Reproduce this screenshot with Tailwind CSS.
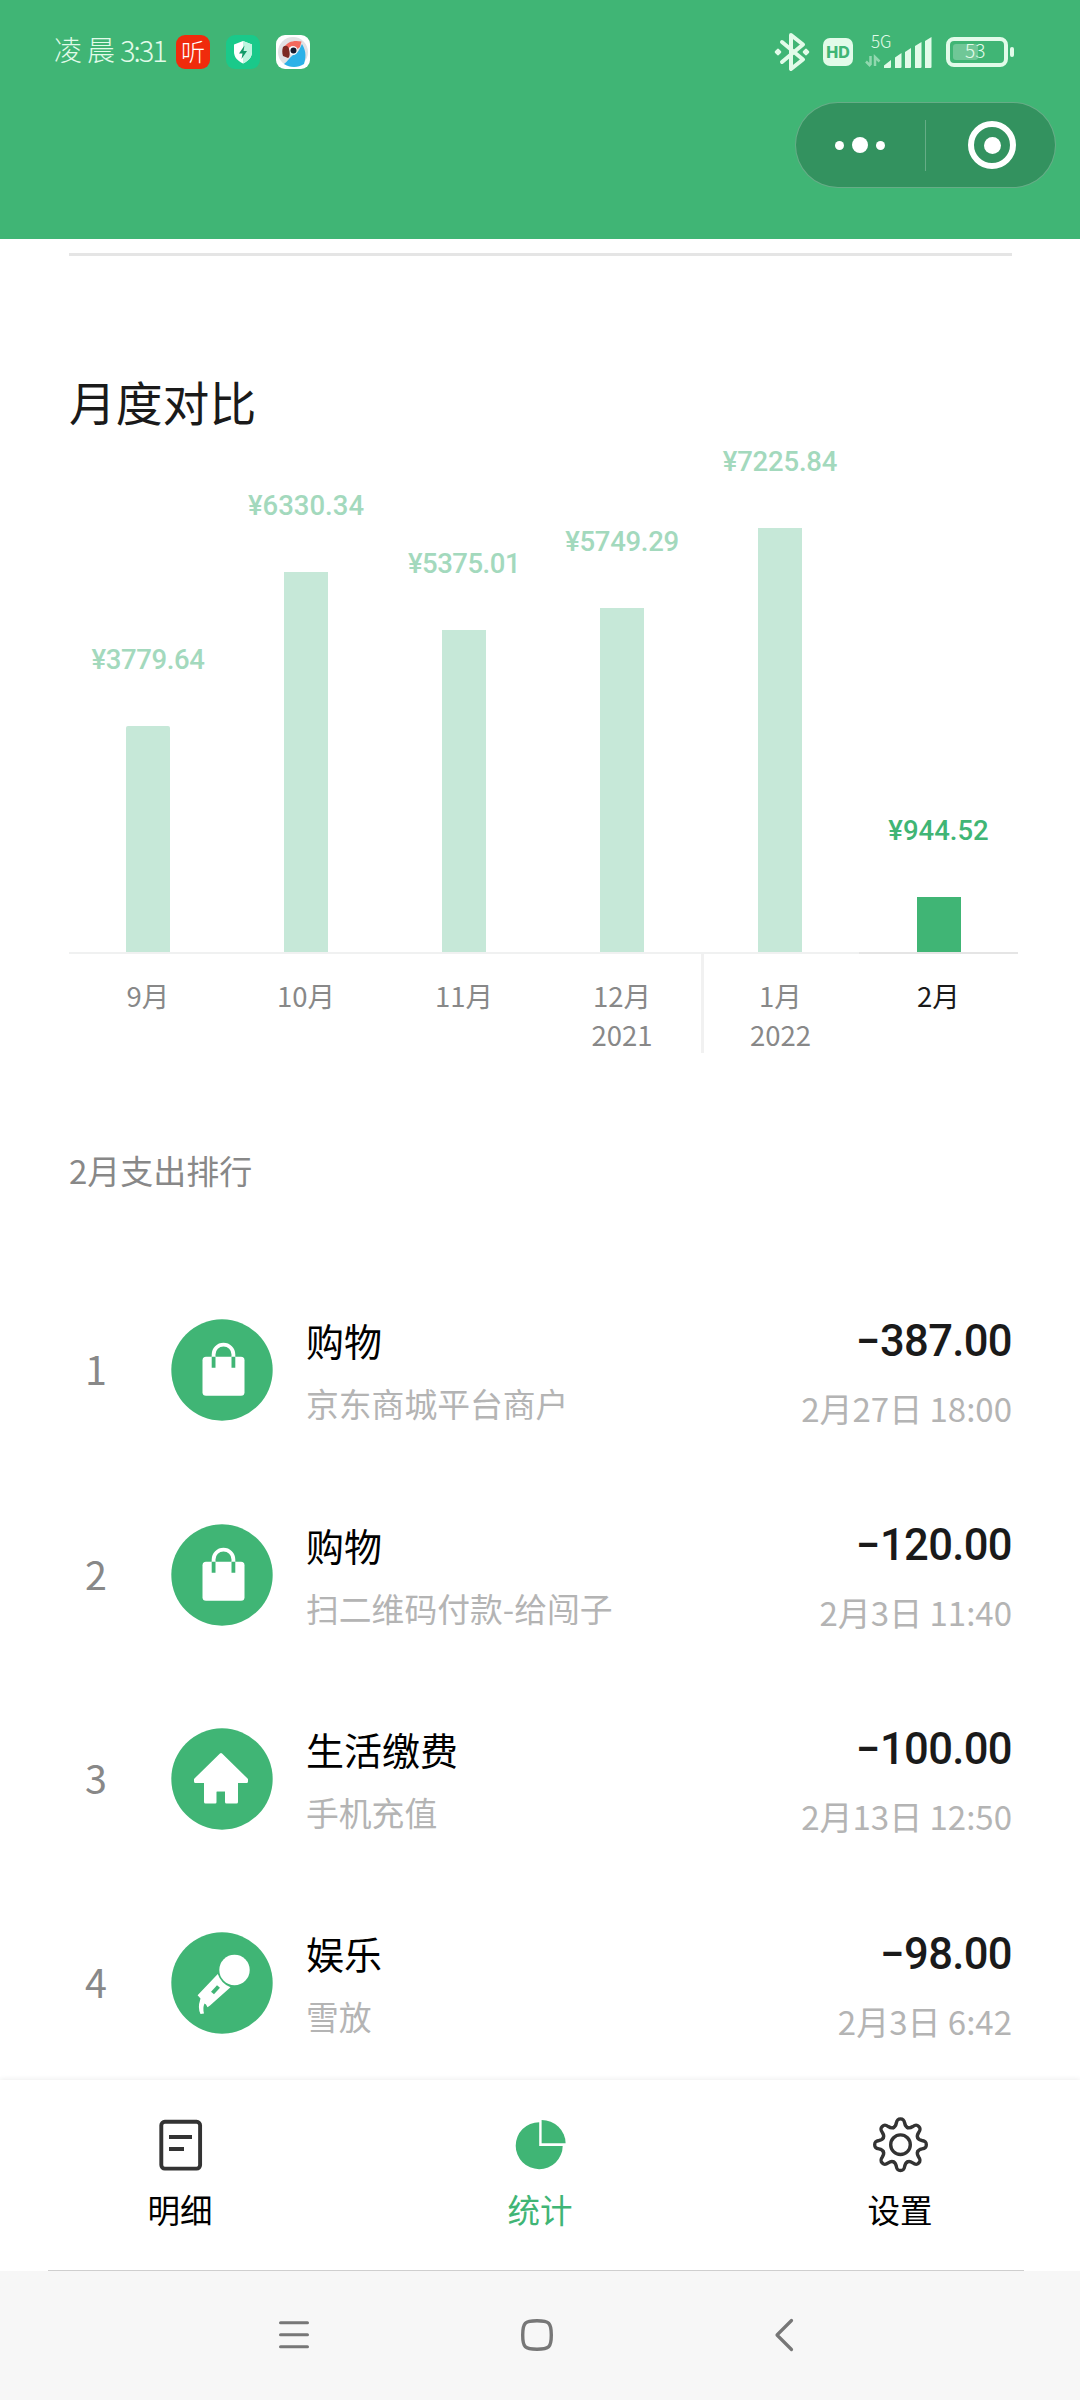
<!DOCTYPE html>
<html lang="zh-CN">
<head>
<meta charset="utf-8">
<title>月度统计</title>
<script src="https://cdn.jsdelivr.net/npm/@tailwindcss/browser@4"></script>
</head>
<body class="flex h-[2400px] w-[1080px] flex-col overflow-hidden bg-white font-['Noto_Sans_CJK_SC',sans-serif] text-[#1a1a1a]">

<header class="flex h-[239px] shrink-0 flex-col bg-[#40b575]">
  <!-- status bar -->
  <div class="flex h-[104px] shrink-0 items-center justify-between pr-[66px] pl-[54px] text-[#e2fbe9]">
    <div class="flex items-center">
      <div class="flex w-[122px] shrink-0 items-center text-[28px] leading-[40px] font-light whitespace-nowrap">
        <span class="mt-[-6px] tracking-[5px]">凌晨</span><span class="mt-[-6px] text-[29px] tracking-[-2px]">3:31</span>
      </div>
      <div class="flex h-[34px] w-[34px] items-center justify-center rounded-[9px] bg-[#f02b0c] text-[24px] leading-[30px] font-light text-white"><span class="mt-[-3px]">听</span></div>
      <svg class="ml-4" width="34" height="34" viewBox="0 0 34 34">
        <rect width="34" height="34" rx="9" fill="#1ac98a"/>
        <path d="M17 6 26 9.500V17C26 22 22.500 26 17 28.500 11.500 26 8 22 8 17V9.500Z" fill="#fff"/>
        <path d="M17 6 26 9.500V17C26 22 22.500 26 17 28.500Z" fill="#bff5e0"/>
        <path d="M18.500 10.500 13 18.500H16.500L15.500 24 21 16H17.500Z" fill="#129a68"/>
      </svg>
      <svg class="ml-4" width="34" height="34" viewBox="0 0 34 34">
        <rect width="34" height="34" rx="9" fill="#fff"/>
        <circle cx="17" cy="17" r="15" fill="#e2e2e4"/>
        <path d="M8 13C11 6 19 5 25.500 6.500L24 12 20 15 11 14Z" fill="#f4695c"/>
        <path d="M17 20C22 19 24 13 26 9 29 14 31 20 28 29 22 33 14 33 8 29 11 27 13 23 17 20Z" fill="#2cb1e8"/>
        <circle cx="17" cy="15.500" r="4.500" fill="#f6fafc"/>
        <circle cx="17.500" cy="15.500" r="3" fill="#171a2c"/>
        <path d="M7 12C9 10 12 10 13 14 14 18 14 22 12 23L7 21C6 18 6 15 7 12Z" fill="#7d2a22"/>
      </svg>
    </div>
    <div class="flex items-center">
      <svg width="36" height="40" viewBox="0 0 36 40" fill="none" stroke="currentColor" stroke-width="4" stroke-linejoin="round" stroke-linecap="round">
        <path d="M8 10 29 27.500 17 37V3L29 12.500 8 30"/>
        <path d="M4 18.200 5.800 20 4 21.800 2.200 20ZM32 18.200 33.800 20 32 21.800 30.200 20Z" stroke-width="3"/>
      </svg>
      <div class="ml-[13px] flex h-[28px] w-[30px] items-center justify-center rounded-[7px] bg-[#e2fbe9] font-[Inter,sans-serif] text-[16px] leading-[20px] font-extrabold text-[#40b575]">HD</div>
      <div class="relative ml-[12px] h-[36px] w-[67px]">
        <span class="absolute top-[-2px] left-[6px] text-[17px] leading-[18px] font-light">5G</span>
        <svg class="absolute top-0 left-0" width="67" height="36" viewBox="0 0 67 36" fill="currentColor">
          <path d="M19 34V31.500L26 26V33Q26 34 25 34ZM30 34V23.500L36.500 19V33Q36.500 34 35.500 34ZM40 34V18L46 14V33Q46 34 45 34ZM50 34V12L56.500 8V33Q56.500 34 55.500 34ZM60 34V7L66.500 3V33Q66.500 34 65.500 34Z"/>
          <path d="M5.500 22V31M1 27.500 5.500 32M10 32V23L14.500 27.500" fill="none" stroke="currentColor" stroke-width="2.500" opacity=".5"/>
        </svg>
      </div>
      <div class="ml-[14px] flex h-[30px] w-[62px] items-center rounded-[8px] border-4 border-[#e2fbe9] px-[3px]">
        <div class="h-[16px] w-[25px] rounded-[3px] bg-white/25"></div>
        <span class="-ml-[13px] mt-[-4px] text-[19px] leading-[20px] font-light">53</span>
      </div>
      <div class="ml-[2px] h-[10px] w-[4px] rounded-[2px] bg-[#e2fbe9]"></div>
    </div>
  </div>
  <!-- mini-program capsule -->
  <div class="mt-[-2px] mr-[24px] flex h-[86px] w-[261px] items-center self-end rounded-full border border-white/25 bg-[#33925f]">
    <div class="flex w-[127px] items-center justify-center gap-2">
      <i class="h-[9px] w-[9px] rounded-full bg-white"></i><i class="h-4 w-4 rounded-full bg-white"></i><i class="h-[9px] w-[9px] rounded-full bg-white"></i>
    </div>
    <div class="ml-[2px] h-[51px] w-px bg-white/25"></div>
    <div class="ml-[42px] flex h-12 w-12 items-center justify-center rounded-full border-[6px] border-white"><i class="h-[17px] w-[17px] rounded-full bg-white"></i></div>
  </div>
</header>

<main class="flex h-[1841px] shrink-0 flex-col overflow-hidden pr-[68px] pl-[69px]">
  <div class="mt-[14px] h-[3px] shrink-0 bg-[#e5e5e5]"></div>
  <h1 class="mt-[115px] h-[61px] shrink-0 text-[46.800px] leading-[60px] font-normal">月度对比</h1>

  <!-- monthly bar chart -->
  <section class="mt-[8px] flex h-[614px] w-[949px] shrink-0">
    <div class="flex w-[158px] flex-col items-center">
      <div class="flex h-[512px] w-full flex-col items-center justify-end">
        <span class="mb-[46px] font-[Roboto] text-[27.500px] leading-[40px] font-medium tracking-[-0.400px] text-[#a3d9bd]">¥3779.64</span>
        <div class="w-11 rounded-t-[2px] bg-[#c6e8d8]" style="height:226px"></div>
      </div>
      <div class="h-[2px] w-full bg-[#f0f1f1]"></div>
      <div class="mt-[22px] text-center text-[27.500px] leading-[39px] text-[#888]">9月</div>
    </div>
    <div class="flex w-[158px] flex-col items-center">
      <div class="flex h-[512px] w-full flex-col items-center justify-end">
        <span class="mb-[46px] font-[Roboto] text-[27.500px] leading-[40px] font-medium text-[#a3d9bd]">¥6330.34</span>
        <div class="w-11 bg-[#c6e8d8]" style="height:380px"></div>
      </div>
      <div class="h-[2px] w-full bg-[#f0f1f1]"></div>
      <div class="mt-[22px] text-center text-[27.500px] leading-[39px] text-[#888]">10月</div>
    </div>
    <div class="flex w-[158px] flex-col items-center">
      <div class="flex h-[512px] w-full flex-col items-center justify-end">
        <span class="mb-[46px] font-[Roboto] text-[27.500px] leading-[40px] font-medium tracking-[-0.500px] text-[#a3d9bd]">¥5375.01</span>
        <div class="w-11 bg-[#c6e8d8]" style="height:322px"></div>
      </div>
      <div class="h-[2px] w-full bg-[#f0f1f1]"></div>
      <div class="mt-[22px] text-center text-[27.500px] leading-[39px] text-[#888]">11月</div>
    </div>
    <div class="flex w-[158px] flex-col items-center">
      <div class="flex h-[512px] w-full flex-col items-center justify-end">
        <span class="mb-[46px] font-[Roboto] text-[27.500px] leading-[40px] font-medium tracking-[-0.300px] text-[#a3d9bd]">¥5749.29</span>
        <div class="w-11 bg-[#c6e8d8]" style="height:344px"></div>
      </div>
      <div class="h-[2px] w-full bg-[#f0f1f1]"></div>
      <div class="mt-[22px] text-center text-[27.500px] leading-[39px] text-[#888]">12月<br>2021</div>
    </div>
    <div class="flex w-[158px] flex-col items-center">
      <div class="flex h-[512px] w-full flex-col items-center justify-end">
        <span class="mb-[46px] font-[Roboto] text-[27.500px] leading-[40px] font-medium tracking-[-0.200px] text-[#a3d9bd]">¥7225.84</span>
        <div class="w-11 bg-[#c6e8d8]" style="height:424px"></div>
      </div>
      <div class="h-[2px] w-full bg-[#f0f1f1]"></div>
      <div class="-ml-[1px] h-[99px] w-full border-l-[3px] border-[#f1f1f1] pt-[22px] pr-[1px] text-center text-[27.500px] leading-[39px] text-[#888]">1月<br>2022</div>
    </div>
    <div class="flex w-[159px] flex-col items-center">
      <div class="flex h-[512px] w-full flex-col items-center justify-end">
        <span class="mb-[46px] font-[Roboto] text-[27.500px] leading-[40px] font-medium text-[#40b575]">¥944.52</span>
        <div class="w-11 bg-[#40b575]" style="height:55px"></div>
      </div>
      <div class="h-[2px] w-full bg-[#e5e5e5]"></div>
      <div class="mt-[22px] text-center text-[27.500px] leading-[39px]">2月</div>
    </div>
  </section>

  <h2 class="mt-[96px] h-[40px] shrink-0 text-[33px] leading-[40px] font-normal text-[#888]">2月支出排行</h2>

  <!-- spending ranking -->
  <ol class="mt-[78px] flex flex-col">
    <li class="flex h-[204.400px] shrink-0 items-center">
      <span class="mt-[-4px] w-[54px] text-center text-[39.500px] leading-[50px] text-[#888]">1</span>
      <svg class="ml-[48px]" width="102" height="102" viewBox="0 0 102 102">
        <circle cx="51" cy="51" r="50.700" fill="#40b575"/>
        <rect x="31.500" y="37.700" width="42" height="39" rx="3.500" fill="#fff"/>
        <path d="M42.600 38V35.500A9.900 9.900 0 0 1 62.400 35.500V38" fill="none" stroke="#fff" stroke-width="3.800"/>
        <path d="M42.600 37.700V48.700M62.400 37.700V48.700" stroke="#40b575" stroke-width="3.800"/>
      </svg>
      <div class="mt-[3px] ml-[33px] flex grow flex-col gap-[13px]">
        <span class="text-[38px] leading-[50px] text-black">购物</span>
        <span class="text-[32.800px] leading-[50px] text-[#b4b4b4]">京东商城平台商户</span>
      </div>
      <div class="mt-[9px] flex flex-col items-end gap-[16px]">
        <span class="font-[Roboto] text-[43.500px] leading-[50px] font-medium tracking-[-0.600px]">−387.00</span>
        <span class="text-[33px] leading-[50px] text-[#b4b4b4]">2月27日 18:00</span>
      </div>
    </li>
    <li class="flex h-[204.400px] shrink-0 items-center">
      <span class="mt-[-4px] w-[54px] text-center text-[39.500px] leading-[50px] text-[#888]">2</span>
      <svg class="ml-[48px]" width="102" height="102" viewBox="0 0 102 102">
        <circle cx="51" cy="51" r="50.700" fill="#40b575"/>
        <rect x="31.500" y="37.700" width="42" height="39" rx="3.500" fill="#fff"/>
        <path d="M42.600 38V35.500A9.900 9.900 0 0 1 62.400 35.500V38" fill="none" stroke="#fff" stroke-width="3.800"/>
        <path d="M42.600 37.700V48.700M62.400 37.700V48.700" stroke="#40b575" stroke-width="3.800"/>
      </svg>
      <div class="mt-[3px] ml-[33px] flex grow flex-col gap-[13px]">
        <span class="text-[38px] leading-[50px] text-black">购物</span>
        <span class="text-[32.800px] leading-[50px] text-[#b4b4b4]">扫二维码付款-给闯子</span>
      </div>
      <div class="mt-[9px] flex flex-col items-end gap-[16px]">
        <span class="font-[Roboto] text-[43.500px] leading-[50px] font-medium tracking-[-0.600px]">−120.00</span>
        <span class="text-[33px] leading-[50px] text-[#b4b4b4]">2月3日 11:40</span>
      </div>
    </li>
    <li class="flex h-[204.400px] shrink-0 items-center">
      <span class="mt-[-4px] w-[54px] text-center text-[39.500px] leading-[50px] text-[#888]">3</span>
      <svg class="ml-[48px]" width="102" height="102" viewBox="0 0 102 102">
        <circle cx="51" cy="51" r="50.700" fill="#40b575"/>
        <path d="M50 26.500 75.500 51.500V53.500H65.500V74H55.500V62.200H44.200V74H34.500V53.500H24.500V51.500Z" fill="#fff" stroke="#fff" stroke-width="3" stroke-linejoin="round"/>
        <path d="M45.700 77.500V63.700H54V77.500Z" fill="#40b575"/>
      </svg>
      <div class="mt-[3px] ml-[33px] flex grow flex-col gap-[13px]">
        <span class="text-[38px] leading-[50px] text-black">生活缴费</span>
        <span class="text-[32.800px] leading-[50px] text-[#b4b4b4]">手机充值</span>
      </div>
      <div class="mt-[9px] flex flex-col items-end gap-[16px]">
        <span class="font-[Roboto] text-[43.500px] leading-[50px] font-medium tracking-[-0.600px]">−100.00</span>
        <span class="text-[33px] leading-[50px] text-[#b4b4b4]">2月13日 12:50</span>
      </div>
    </li>
    <li class="flex h-[204.400px] shrink-0 items-center">
      <span class="mt-[-4px] w-[54px] text-center text-[39.500px] leading-[50px] text-[#888]">4</span>
      <svg class="ml-[48px]" width="102" height="102" viewBox="0 0 102 102">
        <circle cx="51" cy="51" r="50.700" fill="#40b575"/>
        <circle cx="63.500" cy="38" r="15.200" fill="#fff"/>
        <path d="M46.800 42Q50 51.500 59.500 55.300L39 73.500 36.500 75.300 35 72.500 33.500 71.500Q31.500 76 33 81.500L29.500 82Q26.500 75.500 29 68.500L29.500 66.500 26.600 63.300Z" fill="#fff"/>
        <path d="M41.500 61 47.500 54.500" stroke="#40b575" stroke-width="4"/>
      </svg>
      <div class="mt-[3px] ml-[33px] flex grow flex-col gap-[13px]">
        <span class="text-[38px] leading-[50px] text-black">娱乐</span>
        <span class="text-[32.800px] leading-[50px] text-[#b4b4b4]">雪放</span>
      </div>
      <div class="mt-[9px] flex flex-col items-end gap-[16px]">
        <span class="font-[Roboto] text-[43.500px] leading-[50px] font-medium tracking-[-0.600px]">−98.00</span>
        <span class="text-[33px] leading-[50px] text-[#b4b4b4]">2月3日 6:42</span>
      </div>
    </li>
  </ol>
</main>

<!-- tab bar -->
<nav class="grid h-[190px] shrink-0 grid-cols-3 bg-white text-[32.500px] leading-[40px] text-black shadow-[0_-1px_5px_rgba(0,0,0,0.07)]">
  <div class="flex flex-col items-center pt-[36px]">
    <svg width="58" height="58" viewBox="0 0 58 58" fill="none" stroke="#333" stroke-width="3.900">
      <rect x="10.300" y="5.800" width="38.800" height="46.800" rx="3.500"/>
      <path d="M18 21H41M18 33H33"/>
    </svg>
    <span class="mt-[15px]">明细</span>
  </div>
  <div class="flex flex-col items-center pt-[36px] text-[#40b575]">
    <svg width="58" height="58" viewBox="0 0 58 58" fill="currentColor">
      <path d="M28.200 6.200V29.900H51.700A23.500 23.500 0 1 1 28.200 6.200Z"/>
      <path d="M30.600 4A24 23.500 0 0 1 54.600 27.200H30.600Z"/>
    </svg>
    <span class="mt-[15px]">统计</span>
  </div>
  <div class="flex flex-col items-center pt-[36px]">
    <svg width="58" height="58" viewBox="0 0 58 58" fill="none" stroke="#333" stroke-width="3.400" stroke-linecap="round">
      <defs><path id="tooth" d="M-7.100-17.100C-5.100-17.900-4.600-19.500-4.200-21.500C-3.600-25-2.500-25.800 0-25.800C2.500-25.800 3.600-25 4.200-21.500C4.600-19.500 5.100-17.900 7.100-17.100"/></defs>
      <g transform="translate(29.500 28.700)">
        <use href="#tooth"/><use href="#tooth" transform="rotate(45)"/><use href="#tooth" transform="rotate(90)"/><use href="#tooth" transform="rotate(135)"/><use href="#tooth" transform="rotate(180)"/><use href="#tooth" transform="rotate(225)"/><use href="#tooth" transform="rotate(270)"/><use href="#tooth" transform="rotate(315)"/>
        <circle r="9.800"/>
      </g>
    </svg>
    <span class="mt-[15px]">设置</span>
  </div>
</nav>

<!-- system navigation -->
<footer class="flex grow flex-col bg-[#f7f7f7]">
  <div class="flex h-px bg-white pr-[56px] pl-12"><div class="grow bg-[#cfcfcf]"></div></div>
  <div class="flex h-[128px] items-center pl-[276px]">
    <svg width="36" height="36" viewBox="0 0 36 36" fill="none" stroke="#777" stroke-width="3" stroke-linecap="round"><path d="M4.500 5.700H31.500M4.500 17.700H31.500M4.500 29.700H31.500"/></svg>
    <svg class="ml-[207px]" width="36" height="36" viewBox="0 0 36 36" fill="none" stroke="#777" stroke-width="3.400"><path d="M18 3.700C30 3.700 32.300 5.500 32.300 18S30 32.300 18 32.300 3.700 30.500 3.700 18 6 3.700 18 3.700Z"/></svg>
    <svg class="ml-[211px]" width="36" height="36" viewBox="0 0 36 36" fill="none" stroke="#777" stroke-width="3.200" stroke-linecap="round" stroke-linejoin="round"><path d="M25.500 3.500 11 18 25.500 32.500"/></svg>
  </div>
</footer>
</body>
</html>
